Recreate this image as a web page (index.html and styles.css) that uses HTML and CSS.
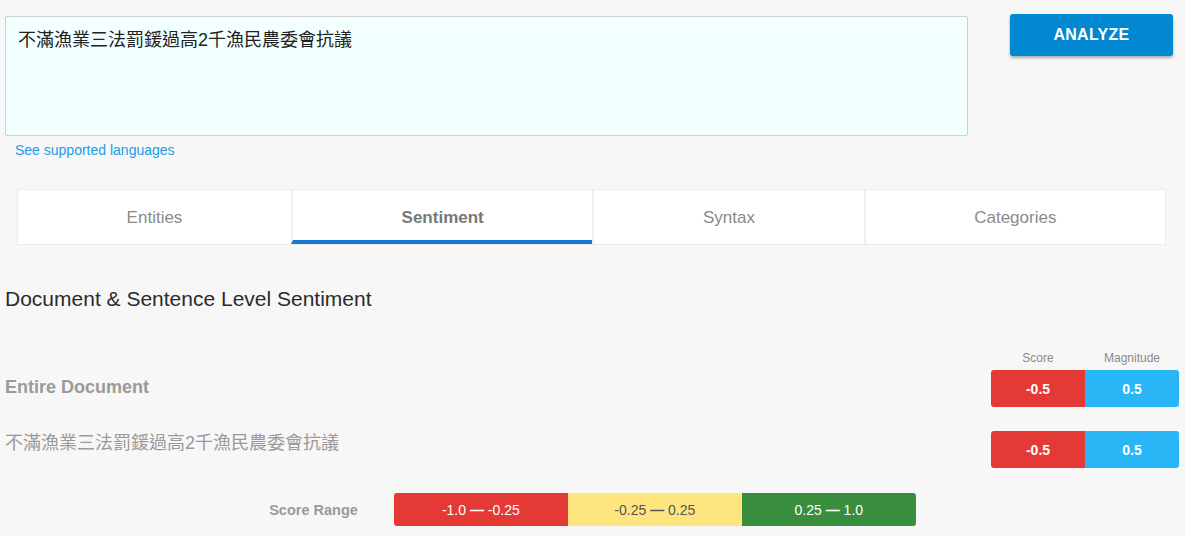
FILE: index.html
```html
<!DOCTYPE html>
<html>
<head>
<meta charset="utf-8">
<link rel="stylesheet" href="styles.css">
</head>
<body>
<div class="page">
  <div class="top">
    <div class="input-col">
      <div class="textbox">不滿漁業三法罰鍰過高2千漁民農委會抗議</div>
      <a class="lang-link" href="#">See supported languages</a>
    </div>
    <button class="analyze">ANALYZE</button>
  </div>

  <div class="tabs">
    <div class="tab">Entities</div>
    <div class="tab active">Sentiment</div>
    <div class="tab">Syntax</div>
    <div class="tab">Categories</div>
  </div>

  <h2 class="heading">Document &amp; Sentence Level Sentiment</h2>

  <div class="labels">
    <span class="lbl">Score</span>
    <span class="lbl">Magnitude</span>
  </div>

  <div class="row">
    <div class="row-title">Entire Document</div>
    <div class="badge"><span class="score">-0.5</span><span class="mag">0.5</span></div>
  </div>
  <div class="row row2">
    <div class="row-text">不滿漁業三法罰鍰過高2千漁民農委會抗議</div>
    <div class="badge"><span class="score">-0.5</span><span class="mag">0.5</span></div>
  </div>

  <div class="range">
    <div class="range-label">Score Range</div>
    <div class="range-bar">
      <span class="seg neg">-1.0 <b class="dash">—</b> -0.25</span>
      <span class="seg neu">-0.25 <b class="dash">—</b> 0.25</span>
      <span class="seg pos">0.25 <b class="dash">—</b> 1.0</span>
    </div>
  </div>
</div>
</body>
</html>
```

FILE: styles.css
```css
html, body {
  margin: 0;
  padding: 0;
  background: #f7f7f7;
  font-family: "Liberation Sans", Arial, "Noto Sans CJK TC", sans-serif;
  overflow: hidden;
}
.page {
  padding: 14px 12px 0 5px;
}
.top {
  display: flex;
  align-items: flex-start;
  justify-content: space-between;
}
.input-col {
  width: 963px;
  padding-top: 2px;
}
.textbox {
  box-sizing: border-box;
  height: 120px;
  border: 1px solid #cfcfcf;
  border-radius: 2px;
  background: #f2ffff;
  padding: 12px 12px;
  font-size: 18px;
  line-height: 22px;
  color: #222;
}
.lang-link {
  display: block;
  margin: 5px 0 0 10px;
  font-size: 14px;
  line-height: 18px;
  color: #1e9be6;
  text-decoration: none;
}
.analyze {
  width: 163px;
  height: 42px;
  border: none;
  border-radius: 3px;
  background: #0288d1;
  color: #fff;
  font-family: "Liberation Sans", Arial, sans-serif;
  font-weight: bold;
  font-size: 16px;
  letter-spacing: 0.3px;
  box-shadow: 0 2px 3px rgba(0,0,0,0.3);
}
.tabs {
  display: flex;
  margin: 30px 7px 0 12px;
  height: 56px;
  background: #fff;
  border: 1px solid #ececec;
  box-sizing: border-box;
}
.tab {
  flex: 1 1 auto;
  display: flex;
  align-items: center;
  justify-content: center;
  font-size: 17px;
  color: #8a8a8a;
  border-left: 2px solid #efefef;
  box-sizing: border-box;
  padding-top: 2px;
}
.tab:first-child {
  border-left: none;
}
.tab.active {
  font-weight: bold;
  color: #777;
  border-bottom: 4px solid #1976d2;
  padding-top: 6px;
}
.heading {
  margin: 42px 0 0 0;
  font-size: 21px;
  font-weight: normal;
  color: #2b2b2b;
  line-height: 24px;
}
.labels {
  display: flex;
  justify-content: flex-end;
  margin-top: 40px;
  margin-right: -6px;
}
.lbl {
  width: 94px;
  text-align: center;
  font-size: 12px;
  line-height: 14px;
  color: #8a8a8a;
}
.row {
  display: flex;
  align-items: center;
  justify-content: space-between;
  margin-top: 5px;
  margin-right: -6px;
}
.row2 {
  margin-top: 24px;
}
.row-title {
  font-size: 18px;
  font-weight: bold;
  color: #9a9a9a;
  margin-top: -3px;
}
.row-text {
  font-size: 18px;
  color: #9a9a9a;
  margin-top: -17px;
}
.badge {
  display: flex;
  width: 188px;
  height: 37px;
  border-radius: 3px;
  overflow: hidden;
}
.badge span {
  flex: 1;
  display: flex;
  align-items: center;
  justify-content: center;
  color: #fff;
  font-weight: bold;
  font-size: 14px;
}
.score { background: #e53935; }
.mag { background: #29b6f6; }
.range {
  display: flex;
  justify-content: center;
  align-items: center;
  gap: 36px;
  margin: 25px -12px 0 -5px;
}
.range-label {
  font-size: 14.5px;
  font-weight: bold;
  color: #9a9a9a;
}
.range-bar {
  display: flex;
  width: 522px;
  height: 33px;
  border-radius: 3px;
  overflow: hidden;
}
.seg {
  flex: 1;
  display: flex;
  align-items: center;
  justify-content: center;
  font-size: 14px;
  white-space: pre;
}
.dash {
  font-weight: bold;
}
.neg { background: #e53935; color: #fff; }
.neu { background: #ffe57f; color: #555; }
.pos { background: #388e3c; color: #fff; }
```
